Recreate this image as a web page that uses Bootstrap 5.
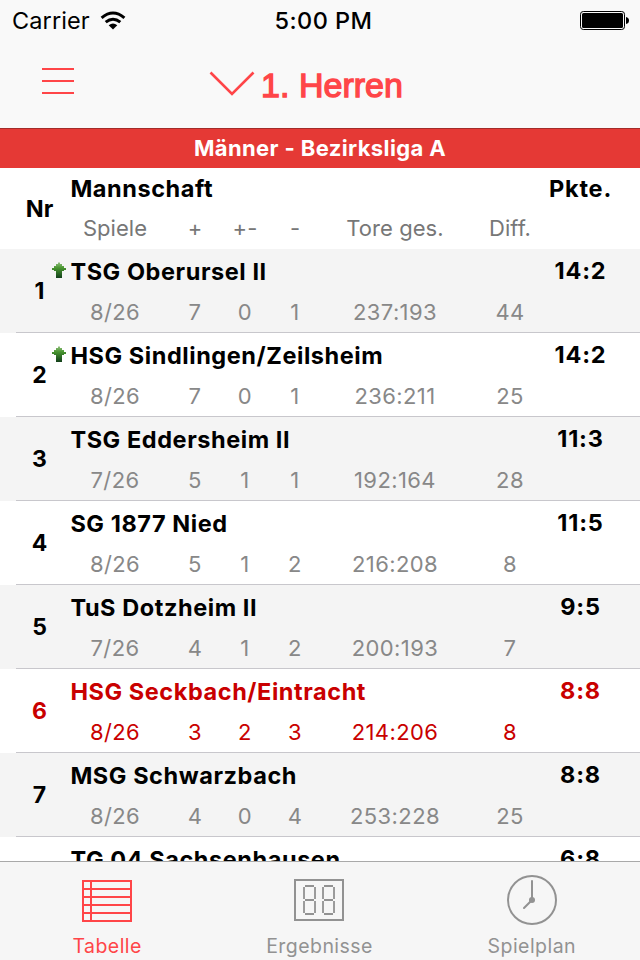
<!DOCTYPE html>
<html lang="de">
<head>
<meta charset="utf-8">
<meta name="viewport" content="width=device-width, initial-scale=1">
<title>1. Herren</title>
<link href="https://cdn.jsdelivr.net/npm/bootstrap@5.3.0/dist/css/bootstrap.min.css" rel="stylesheet">
<style>
body{width:640px;height:960px;font-family:Inter,"Liberation Sans",sans-serif;color:#000;line-height:1}
svg{display:block;flex:none}
.app{width:640px;height:960px}
.status{height:40px;font-size:24px;line-height:42px;padding:0 11px 0 12px}
.status>*{flex:1 1 0}
.status svg{margin-top:1px}
.carrier{font-size:23.5px;letter-spacing:.1px;padding-top:1px}
.clock{font-weight:500;font-size:23.5px;letter-spacing:.45px;padding:1px 0 0 6px}
.topbar{background:#f9f9f9;height:128px}
.titlebar{height:88px;padding:0 42px}
.menu-icon{margin-top:-6px}
.chevron{margin-left:135px}
.title-text{font-family:"Liberation Sans",sans-serif;font-size:34px;font-weight:400;color:#ff4548;-webkit-text-stroke:1.3px #ff4548;letter-spacing:.03px;line-height:88px;margin:2px 0 0 6px}
.league{height:40px;background:#e53935;border-top:1px solid #a32c2a;font-weight:700;font-size:22px;line-height:38px;letter-spacing:.38px}
.entry{height:84px;border:0;background:linear-gradient(#c8c7cc,#c8c7cc) 16px 83px/624px 1px no-repeat #fff}
.entry:nth-child(even){background-color:#f4f4f4}
.entry.heading{height:81px;background:#fff}
.nr{width:61px;margin-left:9px;font-size:23px;font-weight:700;line-height:84px}
.heading .nr{line-height:81px;font-size:23.5px}
.unranked{margin-left:70px}
.middle{width:480px}
.team{font-size:23.5px;font-weight:700;height:44px;line-height:46px;letter-spacing:.57px;white-space:nowrap;padding-left:.4px}
.heading .team,.heading .pts{line-height:42px;height:41px}
.stats{display:grid;grid-template-columns:100px 50px 50px 50px 150px 80px;color:#888;font-size:22px;line-height:38px;letter-spacing:.4px;text-align:center}
.stats span:first-child{padding-right:10px}
.heading .stats{color:#777;letter-spacing:.05px}
.pts{width:61px;font-size:23.5px;font-weight:700;line-height:44px;letter-spacing:.8px;white-space:nowrap}
.own,.own .stats{color:#c90000}
.up{position:absolute;left:52px;top:13px}
.tabs{height:99px;background:#f6f6f6;border-top:1px solid #a9a9a9;color:#929292;font-size:19.5px;letter-spacing:.45px}
.tabs a{color:inherit;text-decoration:none;padding-top:13px;line-height:22px}
.tabs a:first-child{padding-left:1px}
.tabs a:last-child{padding-right:2px}
.tabs a.on{color:#ff4548}
.tabs svg{margin-bottom:10px}
</style>
<script src="https://cdn.jsdelivr.net/npm/bootstrap@5.3.0/dist/js/bootstrap.bundle.min.js"></script>
</head>
<body>
<svg width="0" height="0" class="position-absolute" aria-hidden="true">
<defs><linearGradient id="green" x1="0" y1="0" x2="0" y2="1"><stop offset="0" stop-color="#8fbe7c"/><stop offset=".35" stop-color="#48952f"/><stop offset="1" stop-color="#123f1a"/></linearGradient></defs>
<symbol id="arrow" viewBox="0 0 14 16"><path d="M6 0.500H8V2H10V4H12V6H14V8H12V9H10V16H4V9H2V8H0V6H2V4H4V2H6Z" fill="url(#green)"/></symbol>
</svg>
<div class="app d-flex flex-column overflow-hidden">
<header class="topbar flex-shrink-0">
  <div class="status d-flex align-items-center">
    <div class="d-flex align-items-center"><span class="carrier">Carrier</span>
      <svg class="ms-2" width="30" height="20" viewBox="0 0 30 20"><g fill="none" stroke="#000" stroke-width="3"><path d="M3.600 6.800Q15-2.800 26.400 6.800"/><path d="M7.700 11.200Q15 5.200 22.300 11.200"/></g><path d="M10.700 14.200Q15 10.800 19.300 14.200L15 18.500Z"/></svg>
    </div>
    <div class="clock text-center">5:00 PM</div>
    <div class="d-flex justify-content-end">
      <svg width="49" height="20" viewBox="0 0 49 20"><rect x=".5" y=".5" width="44" height="18" rx="2.8" fill="none" stroke="#000"/><rect x="2" y="2" width="41" height="15" rx="1.5"/><path d="M46 6Q49 6.500 49 9.500T46 13Z"/></svg>
    </div>
  </div>
  <div class="titlebar d-flex align-items-center">
    <svg class="menu-icon" width="32" height="28" viewBox="0 0 32 28" fill="#ff4548"><path d="M0 1h32v2H0zM0 13h32v2H0zM0 25h32v2H0z"/></svg>
    <svg class="chevron" width="46" height="26" viewBox="0 0 46 26" fill="none" stroke="#ff4548" stroke-width="2.6"><path d="M1.500 1.500L23 23L44.500 1.500"/></svg>
    <span class="title-text">1. Herren</span>
  </div>
</header>
<div class="league text-white text-center flex-shrink-0">Männer - Bezirksliga A</div>
<main class="flex-grow-1 overflow-hidden">
  <div class="entry heading d-flex"><div class="nr text-center">Nr</div><div class="middle"><div class="team">Mannschaft</div><div class="stats"><span>Spiele</span><span>+</span><span>+-</span><span>-</span><span>Tore ges.</span><span>Diff.</span></div></div><div class="pts d-flex justify-content-center">Pkte.</div></div>
  <div class="entry d-flex position-relative"><div class="nr text-center">1</div><svg class="up" width="14" height="16"><use href="#arrow"/></svg><div class="middle"><div class="team">TSG Oberursel II</div><div class="stats"><span>8/26</span><span>7</span><span>0</span><span>1</span><span>237:193</span><span>44</span></div></div><div class="pts d-flex justify-content-center">14:2</div></div>
  <div class="entry d-flex position-relative"><div class="nr text-center">2</div><svg class="up" width="14" height="16"><use href="#arrow"/></svg><div class="middle"><div class="team">HSG Sindlingen/Zeilsheim</div><div class="stats"><span>8/26</span><span>7</span><span>0</span><span>1</span><span>236:211</span><span>25</span></div></div><div class="pts d-flex justify-content-center">14:2</div></div>
  <div class="entry d-flex"><div class="nr text-center">3</div><div class="middle"><div class="team">TSG Eddersheim II</div><div class="stats"><span>7/26</span><span>5</span><span>1</span><span>1</span><span>192:164</span><span>28</span></div></div><div class="pts d-flex justify-content-center">11:3</div></div>
  <div class="entry d-flex"><div class="nr text-center">4</div><div class="middle"><div class="team">SG 1877 Nied</div><div class="stats"><span>8/26</span><span>5</span><span>1</span><span>2</span><span>216:208</span><span>8</span></div></div><div class="pts d-flex justify-content-center">11:5</div></div>
  <div class="entry d-flex"><div class="nr text-center">5</div><div class="middle"><div class="team">TuS Dotzheim II</div><div class="stats"><span>7/26</span><span>4</span><span>1</span><span>2</span><span>200:193</span><span>7</span></div></div><div class="pts d-flex justify-content-center">9:5</div></div>
  <div class="entry own d-flex"><div class="nr text-center">6</div><div class="middle"><div class="team">HSG Seckbach/Eintracht</div><div class="stats"><span>8/26</span><span>3</span><span>2</span><span>3</span><span>214:206</span><span>8</span></div></div><div class="pts d-flex justify-content-center">8:8</div></div>
  <div class="entry d-flex"><div class="nr text-center">7</div><div class="middle"><div class="team">MSG Schwarzbach</div><div class="stats"><span>8/26</span><span>4</span><span>0</span><span>4</span><span>253:228</span><span>25</span></div></div><div class="pts d-flex justify-content-center">8:8</div></div>
  <div class="entry d-flex"><div class="middle unranked"><div class="team">TG 04 Sachsenhausen</div></div><div class="pts d-flex justify-content-center">6:8</div></div>
</main>
<nav class="tabs d-flex flex-shrink-0">
  <a href="#" class="on col d-flex flex-column align-items-center"><svg width="50" height="50" viewBox="0 0 50 50" fill="none" stroke="currentColor" stroke-width="2"><path d="M1 6H49V46H1ZM1 14H49M1 22H49M1 30H49M1 38H49M9 6V46"/></svg>Tabelle</a>
  <a href="#" class="col d-flex flex-column align-items-center"><svg width="50" height="50" viewBox="0 0 50 50" fill="none" stroke="currentColor" stroke-width="2"><path d="M1 5H49V45H1Z"/><g id="eight" stroke-width="1.8"><path d="M11 11H20M11 25H20M11 39H20M10 12V24M21 12V24M10 26V38M21 26V38"/></g><use href="#eight" x="19"/></svg>Ergebnisse</a>
  <a href="#" class="col d-flex flex-column align-items-center"><svg width="50" height="50" viewBox="0 0 50 50" fill="none" stroke="currentColor" stroke-width="2" stroke-linecap="round"><circle cx="25" cy="25" r="24"/><path d="M25 6V25L17 33"/><circle cx="25" cy="25" r="3" fill="currentColor" stroke="none"/></svg>Spielplan</a>
</nav>
</div>
</body>
</html>
